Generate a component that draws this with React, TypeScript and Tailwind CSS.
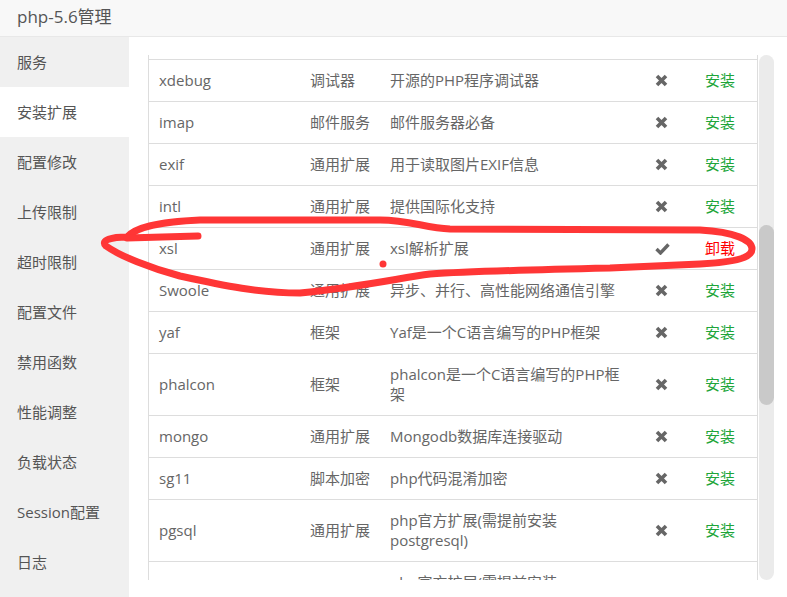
import React from "react"

interface Ext {
  name: string
  type: string
  desc: string
  installed?: boolean
}

const menu = [
  "服务",
  "安装扩展",
  "配置修改",
  "上传限制",
  "超时限制",
  "配置文件",
  "禁用函数",
  "性能调整",
  "负载状态",
  "Session配置",
  "日志",
]

const exts: Ext[] = [
  { name: "xdebug", type: "调试器", desc: "开源的PHP程序调试器" },
  { name: "imap", type: "邮件服务", desc: "邮件服务器必备" },
  { name: "exif", type: "通用扩展", desc: "用于读取图片EXIF信息" },
  { name: "intl", type: "通用扩展", desc: "提供国际化支持" },
  { name: "xsl", type: "通用扩展", desc: "xsl解析扩展", installed: true },
  { name: "Swoole", type: "通用扩展", desc: "异步、并行、高性能网络通信引擎" },
  { name: "yaf", type: "框架", desc: "Yaf是一个C语言编写的PHP框架" },
  { name: "phalcon", type: "框架", desc: "phalcon是一个C语言编写的PHP框\n架" },
  { name: "mongo", type: "通用扩展", desc: "Mongodb数据库连接驱动" },
  { name: "sg11", type: "脚本加密", desc: "php代码混淆加密" },
  { name: "pgsql", type: "通用扩展", desc: "php官方扩展(需提前安装\npostgresql)" },
  { name: "pdo_pgsql", type: "通用扩展", desc: "php官方扩展(需提前安装\npostgresql)" },
]

const RemoveIcon = () => (
  <svg width="13" height="13" viewBox="0 0 13 13">
    <path d="M2 2 L11 11 M11 2 L2 11" stroke="#666" strokeWidth="3.6" strokeLinecap="butt" />
  </svg>
)

const OkIcon = () => (
  <svg width="15" height="13" viewBox="0 0 15 13">
    <path d="M1.5 7 L5.5 11 L13.5 2.5" stroke="#666" strokeWidth="3.4" fill="none" strokeLinejoin="miter" />
  </svg>
)

export default function App() {
  return (
    <div
      className="relative w-[787px] h-[597px] overflow-hidden bg-white flex flex-col"
      style={{ fontFamily: '"Open Sans", "Noto Sans CJK SC", sans-serif' }}
    >
      {/* 标题栏 */}
      <div className="h-[37px] shrink-0 bg-[#f8f8f8] border-b border-[#e8e8e8] flex items-center pl-[17px] pb-[2px] text-[17px] text-[#555]">
        php-5.6管理
      </div>

      <div className="flex flex-1 min-h-0">
        {/* 左侧菜单 */}
        <div className="w-[129px] shrink-0 bg-[#f0f0f0]">
          {menu.map((m, i) => (
            <div
              key={m}
              className={`h-[50px] flex items-center pl-[17px] text-[15px] text-[#555] ${
                i === 1 ? "bg-white" : ""
              }`}
            >
              {m}
            </div>
          ))}
        </div>

        {/* 内容 */}
        <div className="flex-1 pl-[19px] pt-[18px]">
          <div className="flex h-[525px]">
            <div className="w-[610px] h-full overflow-hidden border-x border-[#ddd] pt-[4px]">
              {exts.map((e) => (
                <div
                  key={e.name}
                  className="grid grid-cols-[150px_80px_266px_49px_1fr] items-center border-t border-[#ddd] pt-[10px] pb-[11px] text-[15px] leading-[20px] text-[#666]"
                >
                  <div className="pl-[10px]">{e.name}</div>
                  <div className="pl-[11px]">{e.type}</div>
                  <div className="pl-[11px] whitespace-pre-line">{e.desc}</div>
                  <div className="pl-[10px] flex items-center">{e.installed ? <OkIcon /> : <RemoveIcon />}</div>
                  <div className={`pl-[11px] ${e.installed ? "text-[#ff0000]" : "text-[#20a53a]"}`}>
                    {e.installed ? "卸载" : "安装"}
                  </div>
                </div>
              ))}
            </div>
            {/* 滚动条 */}
            <div className="w-[15px] ml-px h-full rounded-full bg-[#ebebeb]">
              <div className="mt-[170px] h-[180px] rounded-full bg-[#c9c9c9]" />
            </div>
          </div>
        </div>
      </div>

      {/* 红色手绘标注 */}
      <svg className="absolute inset-0 pointer-events-none" width="787" height="597">
        <path
          d="M 127 237 C 135 228, 155 222, 200 220 L 380 220 C 410 220, 425 228, 450 229 L 700 230 C 735 232, 752 240, 752 249 C 752 257, 738 262, 700 264 L 610 268 C 520 270, 460 272, 430 274 C 400 278, 360 287, 300 293 C 260 293, 225 286, 180 276 C 150 268, 120 256, 106 246 C 100 240, 112 237, 127 237"
          stroke="#ff3636"
          strokeWidth="7"
          fill="none"
          strokeLinecap="round"
          strokeLinejoin="round"
        />
        <path d="M 127 238 L 198 236" stroke="#ff3636" strokeWidth="7" strokeLinecap="round" />
        <circle cx="383" cy="264" r="3.5" fill="#ff3636" />
      </svg>
    </div>
  )
}
